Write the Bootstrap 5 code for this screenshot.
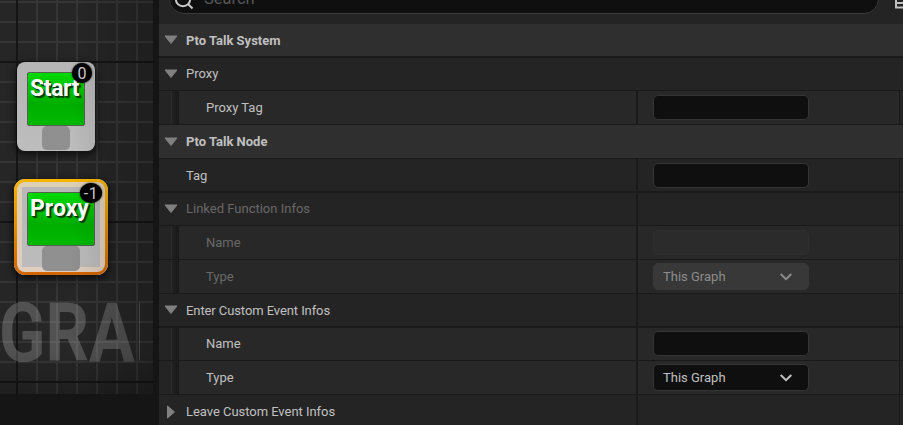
<!DOCTYPE html>
<html lang="en" data-bs-theme="dark">
<head>
<meta charset="utf-8">
<meta name="viewport" content="width=device-width, initial-scale=1">
<title>Pto Talk Graph</title>
<link href="https://cdn.jsdelivr.net/npm/bootstrap@5.3.0/dist/css/bootstrap.min.css" rel="stylesheet">
<style>
body{width:903px;height:425px;background:#151515;font-family:Roboto,sans-serif;font-size:13px;line-height:16px;color:#c0c0c0}
.graph{width:153px;height:394px;background-color:#262626;
background-image:linear-gradient(#151515 0 0),
repeating-linear-gradient(180deg,transparent 0 61px,#151515 61px 63px,transparent 63px 160px),
repeating-linear-gradient(180deg,transparent 0 1px,#353535 1px 3px,transparent 3px 20px),
repeating-linear-gradient(90deg,transparent 0 16px,#353535 16px 18px,transparent 18px 20px);
background-size:2px 100%,auto,auto,auto;background-position:16px 0,0 0,0 0,0 0;background-repeat:no-repeat}
.vignette{inset:0;background:linear-gradient(90deg,transparent 70px,rgba(0,0,0,.2)),linear-gradient(180deg,transparent 350px,rgba(0,0,0,.2));pointer-events:none}
.watermark{left:-1px;top:288px;width:168px;height:92px;overflow:hidden;font-size:81px;line-height:92px;font-weight:700;color:rgba(255,255,255,.2);white-space:nowrap;transform:scaleX(.84);transform-origin:0 0}
.gnode{top:62px;left:17px;width:78px;height:89px;border-radius:8px;background:linear-gradient(#b5b5b5,#bdbdbd);box-shadow:0 3px 8px 1px rgba(0,0,0,.65)}
.gnode .face{left:10px;top:10px;width:58px;height:54px;border:1px solid #55614f;border-radius:2px;background:linear-gradient(#00d900,#00ae00 60%,#00ba00)}
.gnode .pin{left:25px;top:64px;width:28px;height:24px;border-radius:5px;background:#909090}
.gnode .caption{left:13px;top:13px;font-size:23px;line-height:28px;letter-spacing:-.4px;font-weight:700;color:#fff;text-shadow:1px 1px 0 #063b06,2px 2px 1px #063b06}
.gnode .count{left:55px;top:1px;width:20px;height:20px;border-radius:50%;background:#000;box-shadow:0 0 2px #000;font-size:16px;line-height:21px;color:#d0d0d0}
.gnode.selected{left:14px;top:179px;width:94px;height:96px;border-radius:11px;background:linear-gradient(#b8b8b8,#bcbcbc) 8px 8px/78px 80px no-repeat,linear-gradient(#dcd0b4,#e0cdbd)}
.gnode.selected::before{content:"";position:absolute;inset:0;padding:3px;border-radius:11px;background:linear-gradient(#f7b500,#d06500);-webkit-mask:linear-gradient(#000 0 0) content-box,linear-gradient(#000 0 0);-webkit-mask-composite:xor}
.gnode.selected .face{left:13px;top:13px;width:68px}
.gnode.selected .pin{left:28px;top:67px;width:38px;height:25px}
.gnode.selected .caption{left:16px;top:16px;letter-spacing:0}
.gnode.selected .count{left:66px;top:4px;width:22px;letter-spacing:.5px}
.details{width:744px;height:425px;background:#1a1a1a;overflow:hidden}
.searchbar{height:24px;background:#242424}
.searchbox{left:10px;top:-16px;width:710px;height:30px;border:1px solid #383838;border-radius:15px;background:#0f0f0f}
.query{left:45px;top:-11px;font-size:16.500px;line-height:20px;color:#575757}
.prop{height:33px;margin-bottom:1px}
.prop.short{height:32px}
.prop.wide-gap{margin-bottom:2px}
.prop.lower.category{padding-top:2px}
.prop.lower .key{padding-top:2px}
.prop .key,.prop .val,.prop .edge{background:#242424}
.prop .key{width:477px;margin-right:2px;padding-left:27px}
.prop .val{width:261px;margin-right:1px;padding-left:15px}
.prop .edge{width:3px}
.prop.child .gutter{width:20px;background:linear-gradient(90deg,#242424 12px,#2a2a2a 12px 13px,#222 13px,#181818 20px)}
.prop.child .key{width:457px}
.prop.child .key,.prop.child .val{background:#282828}
.prop.group,.prop.category{background:#242424;padding-left:27px}
.prop.category{background:#2f2f2f;font-weight:700}
.tight{letter-spacing:-.09px}
.snug{letter-spacing:-.04px}
.arrow{left:5px;top:50%;margin-top:-5px}
.field{width:156px;height:25px;border:1px solid #353535;border-radius:5px;background:#0f0f0f}
.prop.short.child .val{padding-bottom:1px}
.combo{height:27px;padding:0 15px 0 9px}
.off .key,.off .field{color:#686868}
.off .field{background:#2b2b2b;border-color:#2e2e2e}
.off .combo{background:#383838;border-color:#383838;color:#8c8c8c}
</style>
<script src="https://cdn.jsdelivr.net/npm/bootstrap@5.3.0/dist/js/bootstrap.bundle.min.js"></script>
</head>
<body class="d-flex overflow-hidden m-0">
<svg class="d-none">
<symbol id="down" viewBox="0 0 14 10"><path d="M1 1H13L7 8.5Z" fill="#808080" stroke="#808080" stroke-linejoin="round"/></symbol>
<symbol id="right" viewBox="0 0 14 14"><path d="M3.5 1V13L10.500 7Z" fill="#808080" stroke="#808080" stroke-linejoin="round"/></symbol>
<symbol id="chev" viewBox="0 0 14 10"><path d="M1.7 2L7 7.2L12.3 2" fill="none" stroke="currentColor" stroke-width="2"/></symbol>
</svg>
<main class="graph position-relative flex-shrink-0 me-1">
<div class="watermark position-absolute">GRAPH</div>
<div class="gnode position-absolute"><div class="face position-absolute"></div><div class="pin position-absolute"></div><div class="caption position-absolute">Start</div><div class="count position-absolute text-center">0</div></div>
<div class="gnode selected position-absolute"><div class="face position-absolute"></div><div class="pin position-absolute"></div><div class="caption position-absolute">Proxy</div><div class="count position-absolute text-center">-1</div></div>
<div class="vignette position-absolute"></div>
</main>
<aside class="details flex-shrink-0 ms-auto">
<div class="searchbar position-relative">
<div class="searchbox position-absolute"></div>
<svg class="position-absolute top-0 start-0" width="744" height="24"><circle cx="24" cy="-1" r="7.200" fill="none" stroke="#c8c8c8" stroke-width="2"/><path d="M29 4L33.500 8.500" stroke="#c8c8c8" stroke-width="2"/><path d="M737 0V7.500H744M737 3H744" fill="none" stroke="#c0c0c0" stroke-width="2"/></svg>
<span class="query position-absolute">Search</span>
</div>
<div class="prop short wide-gap lower category position-relative d-flex align-items-center"><svg class="arrow position-absolute" width="14" height="10"><use href="#down"/></svg>Pto Talk System</div>
<div class="prop short group position-relative d-flex align-items-center"><svg class="arrow position-absolute" width="14" height="10"><use href="#down"/></svg>Proxy</div>
<div class="prop child d-flex"><div class="gutter"></div><div class="key d-flex align-items-center">Proxy Tag</div><div class="val d-flex align-items-center"><div class="field"></div></div><div class="edge"></div></div>
<div class="prop category position-relative d-flex align-items-center"><svg class="arrow position-absolute" width="14" height="10"><use href="#down"/></svg>Pto Talk Node</div>
<div class="prop short wide-gap lower d-flex"><div class="key d-flex align-items-center">Tag</div><div class="val d-flex align-items-center"><div class="field"></div></div><div class="edge"></div></div>
<div class="prop short off position-relative d-flex"><div class="key d-flex align-items-center"><svg class="arrow position-absolute" width="14" height="10"><use href="#down"/></svg>Linked Function Infos</div><div class="val"></div><div class="edge"></div></div>
<div class="prop child off d-flex"><div class="gutter"></div><div class="key d-flex align-items-center">Name</div><div class="val d-flex align-items-center"><div class="field"></div></div><div class="edge"></div></div>
<div class="prop child off d-flex"><div class="gutter"></div><div class="key d-flex align-items-center">Type</div><div class="val d-flex align-items-center"><div class="field combo d-flex align-items-center justify-content-between">This Graph<svg width="14" height="10"><use href="#chev"/></svg></div></div><div class="edge"></div></div>
<div class="prop short wide-gap lower position-relative d-flex"><div class="key tight d-flex align-items-center"><svg class="arrow position-absolute" width="14" height="10"><use href="#down"/></svg>Enter Custom Event Infos</div><div class="val"></div><div class="edge"></div></div>
<div class="prop short child d-flex"><div class="gutter"></div><div class="key d-flex align-items-center">Name</div><div class="val d-flex align-items-center"><div class="field"></div></div><div class="edge"></div></div>
<div class="prop child d-flex"><div class="gutter"></div><div class="key d-flex align-items-center">Type</div><div class="val d-flex align-items-center"><div class="field combo d-flex align-items-center justify-content-between">This Graph<svg width="14" height="10"><use href="#chev"/></svg></div></div><div class="edge"></div></div>
<div class="prop position-relative d-flex"><div class="key snug d-flex align-items-center"><svg class="arrow position-absolute mt-0 translate-middle-y" width="14" height="14"><use href="#right"/></svg>Leave Custom Event Infos</div><div class="val"></div><div class="edge"></div></div>
</aside>
</body>
</html>
